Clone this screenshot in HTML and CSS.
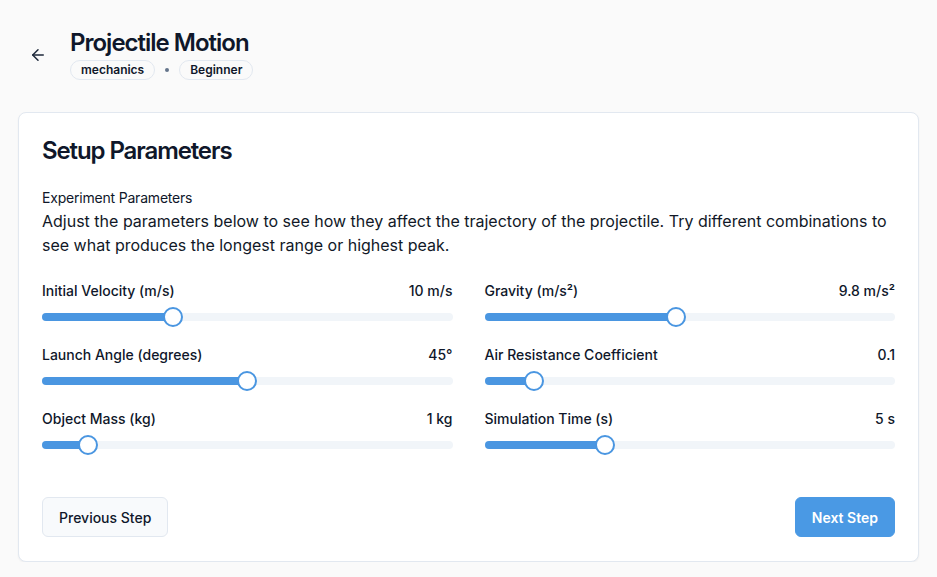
FILE: index.html
```html
<!DOCTYPE html>
<html lang="en">
<head>
<meta charset="utf-8">
<title>Projectile Motion</title>
<link rel="stylesheet" href="styles.css">
</head>
<body>
<div class="page">
  <header class="header">
    <button class="back" aria-label="Back">
      <svg width="18" height="18" viewBox="0 0 24 24" fill="none" stroke="currentColor" stroke-width="2" stroke-linecap="round" stroke-linejoin="round"><path d="M19 12H5"/><path d="M12 19l-7-7 7-7"/></svg>
    </button>
    <div class="title-block">
      <h1 class="title">Projectile Motion</h1>
      <div class="tags">
        <span class="tag">mechanics</span>
        <span class="dot"></span>
        <span class="tag">Beginner</span>
      </div>
    </div>
  </header>

  <section class="card">
    <h2 class="card-title">Setup Parameters</h2>
    <div class="intro">
      <div class="intro-label">Experiment Parameters</div>
      <p class="intro-text">Adjust the parameters below to see how they affect the trajectory of the projectile. Try different combinations to see what produces the longest range or highest peak.</p>
    </div>

    <div class="params">
      <div class="param">
        <div class="param-head"><span>Initial Velocity (m/s)</span><span>10 m/s</span></div>
        <div class="slider" style="--p:0.31"><div class="track"><div class="fill"></div><div class="thumb"></div></div></div>
      </div>
      <div class="param">
        <div class="param-head"><span>Gravity (m/s²)</span><span>9.8 m/s²</span></div>
        <div class="slider" style="--p:0.464"><div class="track"><div class="fill"></div><div class="thumb"></div></div></div>
      </div>
      <div class="param">
        <div class="param-head"><span>Launch Angle (degrees)</span><span>45°</span></div>
        <div class="slider" style="--p:0.5"><div class="track"><div class="fill"></div><div class="thumb"></div></div></div>
      </div>
      <div class="param">
        <div class="param-head"><span>Air Resistance Coefficient</span><span>0.1</span></div>
        <div class="slider" style="--p:0.1"><div class="track"><div class="fill"></div><div class="thumb"></div></div></div>
      </div>
      <div class="param">
        <div class="param-head"><span>Object Mass (kg)</span><span>1 kg</span></div>
        <div class="slider" style="--p:0.091"><div class="track"><div class="fill"></div><div class="thumb"></div></div></div>
      </div>
      <div class="param">
        <div class="param-head"><span>Simulation Time (s)</span><span>5 s</span></div>
        <div class="slider" style="--p:0.283"><div class="track"><div class="fill"></div><div class="thumb"></div></div></div>
      </div>
    </div>

    <div class="actions">
      <button class="btn btn-secondary">Previous Step</button>
      <button class="btn btn-primary">Next Step</button>
    </div>
  </section>
</div>
</body>
</html>
```

FILE: styles.css
```css
* { box-sizing: border-box; }

html, body {
  margin: 0;
  padding: 0;
  background: #fafafa;
  font-family: Inter, "Noto Sans", sans-serif;
  color: #0f172a;
}

.page {
  padding: 29px 18px 0 18px;
}

.header {
  display: flex;
  align-items: center;
  gap: 23px;
  padding-left: 11px;
  margin-bottom: 32px;
}

.back {
  width: 18px;
  height: 18px;
  padding: 0;
  border: none;
  background: none;
  color: #1e293b;
  display: flex;
  align-items: center;
  justify-content: center;
}

.title-block {
  display: flex;
  flex-direction: column;
}

.title {
  margin: 0;
  font-size: 24px;
  line-height: 28px;
  font-weight: 600;
  letter-spacing: -1px;
  color: #0f172a;
}

.tags {
  display: flex;
  align-items: center;
  gap: 10px;
  margin-top: 3px;
}

.tag {
  display: inline-block;
  height: 20px;
  line-height: 18px;
  padding: 0 10px;
  border: 1px solid #e2e8f0;
  border-radius: 10px;
  font-size: 12px;
  font-weight: 600;
  color: #0f172a;
  background: #fafafa;
}

.dot {
  width: 4px;
  height: 4px;
  border-radius: 50%;
  background: #64748b;
}

.card {
  background: #ffffff;
  border: 1px solid #e2e8f0;
  border-radius: 8px;
  box-shadow: 0 1px 2px rgba(15, 23, 42, 0.05);
  padding: 23px 23px 24px 23px;
}

.card-title {
  margin: 0 0 22px 0;
  font-size: 24px;
  line-height: 30px;
  font-weight: 600;
  letter-spacing: -1.1px;
  color: #0f172a;
}

.intro {
  margin-bottom: 24px;
}

.intro-label {
  font-size: 14px;
  line-height: 20px;
  color: #0f172a;
  letter-spacing: -0.2px;
  margin-bottom: 1px;
}

.intro-text {
  margin: 0;
  font-size: 16px;
  line-height: 24px;
  color: #111827;
}

.params {
  display: grid;
  grid-template-columns: 1fr 1fr;
  column-gap: 32px;
  row-gap: 18px;
}

.param-head {
  display: flex;
  justify-content: space-between;
  font-size: 14px;
  line-height: 20px;
  font-weight: 500;
  color: #0f172a;
  margin-bottom: 6px;
}

.slider {
  height: 20px;
  display: flex;
  align-items: center;
}

.track {
  position: relative;
  width: 100%;
  height: 8px;
  border-radius: 4px;
  background: #f1f5f9;
}

.fill {
  position: absolute;
  left: 0;
  top: 0;
  height: 8px;
  border-radius: 4px;
  background: #4a96e1;
  width: calc(10px + (100% - 20px) * var(--p));
}

.thumb {
  position: absolute;
  top: -6px;
  left: calc((100% - 20px) * var(--p));
  width: 20px;
  height: 20px;
  border-radius: 50%;
  background: #ffffff;
  border: 2px solid #4a96e1;
}

.actions {
  display: flex;
  justify-content: space-between;
  margin-top: 42px;
}

.btn {
  height: 40px;
  padding: 0 16px;
  border-radius: 6px;
  font-family: Inter, "Noto Sans", sans-serif;
  font-size: 14px;
  font-weight: 500;
  cursor: pointer;
}

.btn-secondary {
  background: #f8fafc;
  border: 1px solid #e2e8f0;
  color: #0f172a;
}

.btn-primary {
  background: #4a99e4;
  border: 1px solid #4a99e4;
  color: #ffffff;
  font-weight: 600;
}
```
